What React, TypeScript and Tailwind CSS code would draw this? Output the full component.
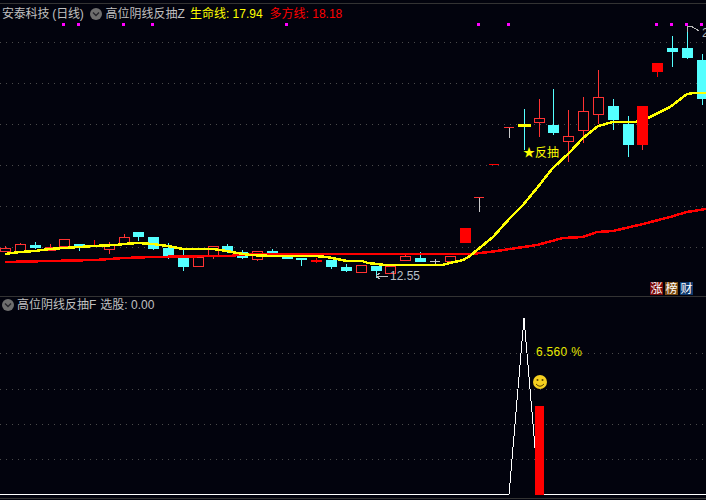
const fontStack = "font-['Liberation_Sans','Noto_Sans_CJK_SC',sans-serif]";

type Kind = "hollow" | "solid" | "cyan" | "grey";
// x0, x1, body top, body bottom, wick top, wick bottom, kind
type Candle = [number, number, number, number, number, number, Kind];

const candles: Candle[] = [
  [0, 11, 248, 251, 246, 251, "hollow"],
  [15, 26, 244, 251, 243, 251, "hollow"],
  [30, 41, 245, 248, 242, 249, "cyan"],
  [45, 56, 247, 250, 244, 250, "hollow"],
  [59, 70, 239, 246, 239, 246, "hollow"],
  [74, 85, 244, 248, 244, 251, "cyan"],
  [89, 100, 245, 247, 240, 247, "solid"],
  [104, 115, 244, 249, 242, 254, "hollow"],
  [119, 130, 237, 244, 234, 244, "hollow"],
  [133, 144, 232, 237, 232, 241, "cyan"],
  [148, 159, 237, 249, 237, 250, "cyan"],
  [163, 174, 248, 256, 243, 259, "cyan"],
  [178, 189, 258, 267, 249, 271, "cyan"],
  [193, 204, 257, 266, 257, 266, "hollow"],
  [208, 219, 246, 256, 246, 259, "hollow"],
  [222, 233, 246, 252, 244, 253, "cyan"],
  [237, 248, 252, 258, 250, 259, "cyan"],
  [252, 263, 251, 259, 251, 261, "hollow"],
  [267, 278, 251, 254, 249, 254, "cyan"],
  [282, 293, 253, 259, 253, 259, "cyan"],
  [296, 307, 258, 260, 258, 266, "cyan"],
  [311, 322, 260, 262, 258, 263, "solid"],
  [326, 337, 260, 267, 260, 269, "cyan"],
  [341, 352, 267, 271, 264, 272, "cyan"],
  [356, 367, 265, 272, 265, 273, "hollow"],
  [371, 382, 266, 271, 266, 278, "cyan"],
  [385, 396, 266, 273, 266, 273, "hollow"],
  [400, 411, 256, 260, 254, 260, "hollow"],
  [415, 426, 258, 262, 252, 262, "cyan"],
  [430, 440, 261, 261, 259, 264, "grey"],
  [445, 456, 256, 261, 256, 261, "hollow"],
  [460, 471, 228, 243, 228, 243, "solid"],
  [474, 484, 197, 197, 197, 212, "grey"],
  [489, 499, 164, 164, 164, 164, "solid"],
  [504, 514, 127, 127, 127, 138, "grey"],
  [518, 531, 125, 125, 109, 150, "cyan"],
  [534, 545, 118, 122, 99, 137, "hollow"],
  [548, 559, 125, 133, 89, 135, "cyan"],
  [563, 574, 136, 141, 110, 162, "hollow"],
  [578, 589, 111, 130, 97, 143, "hollow"],
  [593, 604, 97, 114, 70, 124, "hollow"],
  [608, 619, 106, 120, 99, 130, "cyan"],
  [623, 634, 124, 145, 116, 157, "cyan"],
  [652, 663, 63, 72, 63, 77, "solid"],
  [667, 678, 48, 52, 36, 67, "cyan"],
  [682, 693, 48, 58, 27, 59, "cyan"],
  [697, 708, 60, 99, 54, 105, "cyan"],
];

const lifeLine =
  "5,254 12,253 20,252 35,251 42,250 50,249 64,248 79,247 94,246 116,245 124,244 138,243 153,244 160,245 168,246 173,247 178,248 183,249 213,249 220,250 227,251 237,253 250,255 273,256 288,256 315,256 327,257 337,259 347,261 362,261 368,263 377,264 385,265 442,265 450,263 463,260 470,256 477,250 493,237 510,218 523,205 537,188 552,169 570,152 583,138 598,126 613,122 620,122 635,122 648,118 658,113 670,107 687,94 694,93 706,93";
const longLine =
  "5,262 50,261 95,260 110,259 124,258 153,257 213,256 230,256 247,254 470,254 490,252 510,249 537,245 563,238 583,237 597,232 613,231 643,224 670,217 687,212 706,209";

const topDots = [63, 78, 123, 152, 286, 478, 508, 656, 671, 686, 701];

function CandleMark({ c }: { c: Candle }) {
  const [x0, x1, top, bot, wickTop, wickBot, kind] = c;
  const mid = Math.floor((x0 + x1) / 2);
  const color = kind === "cyan" ? "#54ffff" : kind === "grey" ? "#c8c8c8" : kind === "solid" ? "#ff0000" : "#ff3232";
  return (
    <g>
      {wickBot > wickTop && <rect x={mid} y={wickTop} width={1} height={wickBot - wickTop} fill={color} />}
      {kind === "hollow" ? (
        <rect x={x0 + 0.5} y={top + 0.5} width={x1 - x0 - 1} height={bot - top} fill="#02030d" stroke={color} />
      ) : (
        <rect
          x={x0}
          y={top}
          width={x1 - x0}
          height={Math.max(bot - top, 1)}
          fill={kind === "grey" && wickBot - wickTop > 8 ? "#ff3232" : color}
        />
      )}
    </g>
  );
}

function GridLines({ ys }: { ys: number[] }) {
  return (
    <>
      {ys.map((y) => (
        <line key={y} x1={0} x2={706} y1={y + 0.5} y2={y + 0.5} stroke="#4a4a4a" strokeWidth={1} strokeDasharray="1 5" />
      ))}
    </>
  );
}

function Collapse() {
  return (
    <span className="flex h-3 w-3 shrink-0 items-center justify-center rounded-full bg-[#6e6e6e]">
      <svg width="8" height="6" viewBox="0 0 8 6" fill="none">
        <path d="M1 1.5 L4 4.5 L7 1.5" stroke="#26262c" strokeWidth="1.4" />
      </svg>
    </span>
  );
}

export default function App() {
  return (
    <div className={`flex h-[500px] w-[706px] flex-col overflow-hidden bg-[#02030d] text-[12px] leading-4 ${fontStack}`}>
      {/* main chart */}
      <div className="relative h-[296px] shrink-0 overflow-hidden">
        <svg className="absolute left-0 top-0" width={706} height={296} viewBox="0 0 706 296" shapeRendering="crispEdges">
          <GridLines ys={[42, 83, 124, 165, 206, 247]} />
          {topDots.map((x) => (
            <rect key={x} x={x - 1} y={23} width={3} height={3} fill="#ff00ff" />
          ))}
          {candles.map((c) => (
            <CandleMark key={c[0]} c={c} />
          ))}
          <rect x={518} y={124} width={13} height={3} fill="#ffff00" />
          <polyline points={longLine} fill="none" stroke="#ff0000" strokeWidth={2.5} />
          <polyline points={lifeLine} fill="none" stroke="#ffff00" strokeWidth={2.5} />
          <rect x={637} y={106} width={11} height={39} fill="#ff0000" />
          <rect x={642} y={145} width={1} height={5} fill="#ff3232" />
          <path d="M687 26 V32 M687 26 H691 L699 31" fill="none" stroke="#b8b8b8" />
          <path d="M376 276 H388 M376 276 L380 273 M376 276 L380 279" fill="none" stroke="#c0c0c0" />
        </svg>

        <div className="relative mt-[3px] h-px bg-[#333333]" />
        <div className="relative flex h-[18px] items-center pl-[2px] pt-[2px] text-[#c0c0c0]">
          <span className="tracking-[-0.2px]">安泰科技 (日线)</span>
          <span className="ml-[6px]">
            <Collapse />
          </span>
          <span className="ml-[4px]">高位阴线反抽Z</span>
          <span className="ml-[5px] text-[#ffff00]">生命线: 17.94</span>
          <span className="ml-[7px] text-[#ff0000]">多方线: 18.18</span>
        </div>

        <span className="absolute left-[702px] top-[25px] text-[#b8b8b8]">2</span>
        <span className="absolute left-[523px] top-[145px] text-[#ffff00]">★反抽</span>
        <span className="absolute left-[390px] top-[268px] text-[#b9c0c8]">12.55</span>

        <div className="absolute left-[650px] top-[282px] flex gap-[2px] text-white">
          <span className="flex h-[13px] w-[13px] items-center justify-center bg-[#7a0a0a]">涨</span>
          <span className="flex h-[13px] w-[13px] items-center justify-center bg-[#7a4a10]">榜</span>
          <span className="flex h-[13px] w-[13px] items-center justify-center bg-[#0f3a6e]">财</span>
        </div>
      </div>

      {/* indicator */}
      <div className="relative flex-1 border-t border-[#333333]">
        <svg className="absolute left-0 top-[-297px]" width={706} height={500} viewBox="0 0 706 500" shapeRendering="crispEdges">
          <GridLines ys={[353, 389, 424, 459]} />
          <polyline points="0,494.5 509,494.5 524,318 539,494.5 706,494.5" fill="none" stroke="#ffffff" strokeWidth={1} />
          <rect x={535} y={406} width={9} height={89} fill="#ff0000" />
          <rect x={0} y={498} width={706} height={1} fill="#333333" />
          <g shapeRendering="auto">
            <circle cx={540} cy={382} r={7} fill="#f5d020" />
            <circle cx={537.5} cy={380} r={1} fill="#5a4500" />
            <circle cx={542.5} cy={380} r={1} fill="#5a4500" />
            <path d="M536 384 Q540 388.5 544 384" fill="none" stroke="#5a4500" strokeWidth={1} />
          </g>
        </svg>

        <div className="relative flex h-[16px] items-center pl-[2px] text-[#c0c0c0]">
          <Collapse />
          <span className="ml-[3px]">高位阴线反抽F</span>
          <span className="ml-[4px]">选股: 0.00</span>
        </div>

        <span className="absolute left-[536px] top-[47px] tracking-[0.3px] text-[#e8e800]">6.560 %</span>
      </div>
    </div>
  );
}
